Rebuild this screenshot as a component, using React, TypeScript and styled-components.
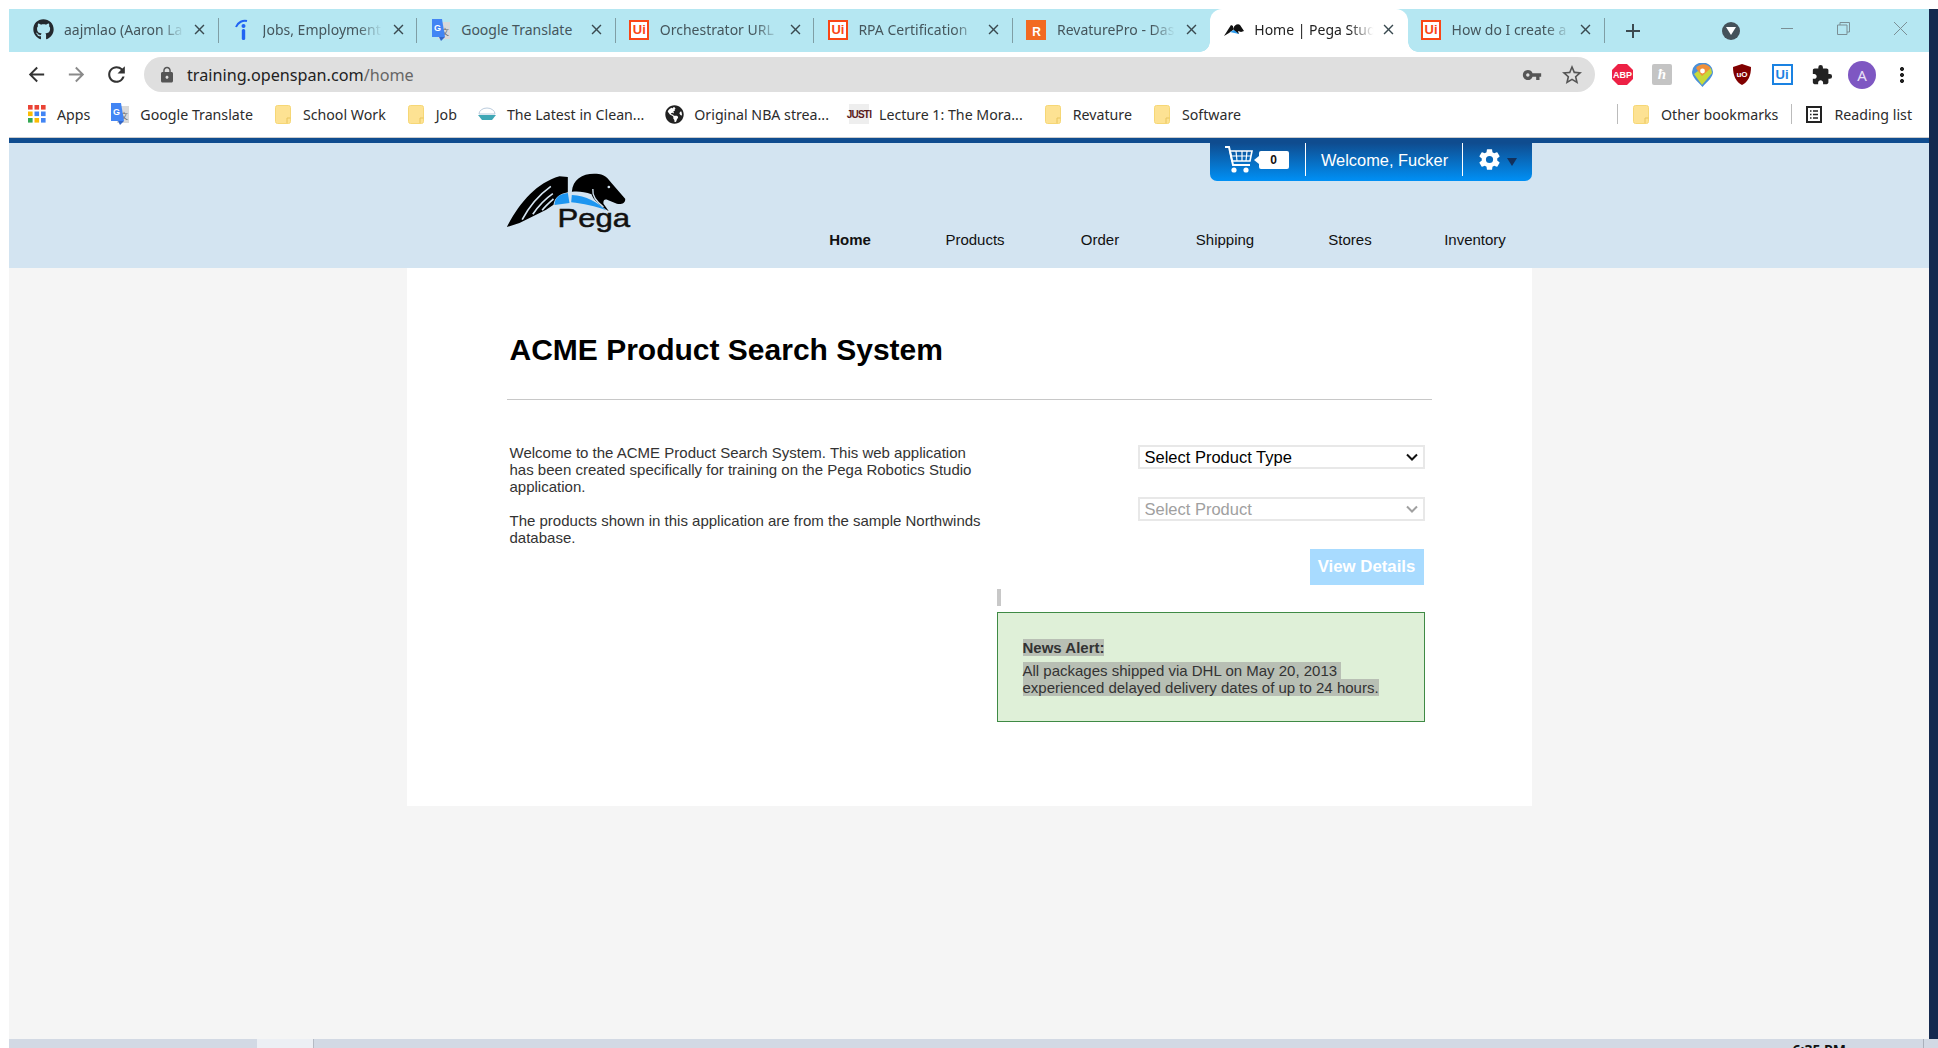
import React from "react";
import styled, { createGlobalStyle } from "styled-components";
import { FaGithub, FaGlobeAmericas } from "react-icons/fa";
import { MdLock, MdVpnKey, MdRefresh, MdArrowBack, MdArrowForward, MdStarBorder, MdClose, MdAdd, MdExtension } from "react-icons/md";
import { IoSettingsSharp } from "react-icons/io5";

const GlobalStyle = createGlobalStyle`
  html, body { margin: 0; padding: 0; height: 100%; background: #fff; overflow: hidden; }
  #root { height: 100%; }
  * { box-sizing: border-box; }
`;

const uiFont = `"Noto Sans", "Open Sans", sans-serif`;
const siteFont = `"Liberation Sans", Arial, sans-serif`;

const chevron = (color: string) =>
  `url("data:image/svg+xml,%3Csvg xmlns='http://www.w3.org/2000/svg' width='12' height='8' viewBox='0 0 12 8'%3E%3Cpath d='M1 1.5L6 6.5L11 1.5' fill='none' stroke='%23${color}' stroke-width='2'/%3E%3C/svg%3E")`;

/* ---------- favicons ---------- */

const UiSquare = styled.span<{ $color?: string; $size?: number }>`
  width: ${(p) => p.$size || 20}px;
  height: ${(p) => p.$size || 20}px;
  flex: none;
  display: flex;
  align-items: center;
  justify-content: center;
  border: 2px solid ${(p) => p.$color || "#fa4616"};
  color: ${(p) => p.$color || "#fa4616"};
  background: #fff;
  font: 700 13px ${siteFont};
`;

const RSquare = styled.span`
  width: 20px;
  height: 20px;
  flex: none;
  display: flex;
  align-items: flex-end;
  justify-content: center;
  padding-bottom: 1px;
  background: #f26a21;
  color: #fff;
  font: 700 12px ${siteFont};
`;

const IndeedIcon = () => (
  <svg width="20" height="22" viewBox="0 0 20 22">
    <path d="M4 8C6 3 11 1 15 2" fill="none" stroke="#2164f3" strokeWidth="2" />
    <circle cx="11.5" cy="7" r="2" fill="#2164f3" />
    <rect x="9.8" y="10" width="3.4" height="11" rx="1.5" fill="#2164f3" />
  </svg>
);

const TranslateIcon = () => (
  <svg width="20" height="24" viewBox="0 0 20 24">
    <rect x="7" y="4" width="12" height="17" fill="#d9d9d9" />
    <text x="10" y="17" fontSize="8" fill="#666" fontFamily="Noto Sans CJK SC, sans-serif">文</text>
    <path d="M1 1H11L14 19H1Z" fill="#4285f4" />
    <path d="M8 19L14 19L10 23Z" fill="#3367c8" />
    <text x="3" y="13" fontSize="9" fontWeight="700" fill="#fff" fontFamily="Liberation Sans, sans-serif">G</text>
  </svg>
);

const PegaMini = () => (
  <svg width="20" height="14" viewBox="0 0 20 14">
    <path d="M0 13L7 2L9 3L9 7L5 10Z" fill="#111" />
    <path d="M9 6C10 2 14 0 16 2L20 8L17 9L14 8L15 11C12 10 10 8 9 6Z" fill="#111" />
    <path d="M6 9L10 7L15 11Z" fill="#2c9cf0" />
  </svg>
);

const FolderIcon = () => (
  <svg width="16" height="19" viewBox="0 0 16 19">
    <rect x="0.5" y="0.5" width="15" height="18" rx="2" fill="#fde293" stroke="#f6d776" />
    <path d="M12 18V13H15.5" fill="none" stroke="#e8c55e" />
  </svg>
);

const AppsIcon = () => (
  <svg width="18" height="18" viewBox="0 0 18 18">
    {["#ea4335", "#ea4335", "#ea4335", "#fbbc05", "#4285f4", "#4285f4", "#34a853", "#fbbc05", "#4285f4"].map((c, i) => (
      <rect key={i} x={(i % 3) * 6.5} y={Math.floor(i / 3) * 6.5} width="4.6" height="4.6" fill={c} />
    ))}
  </svg>
);

const CleanIcon = () => (
  <svg width="20" height="14" viewBox="0 0 20 14">
    <path d="M2 7A8 6 0 0 1 18 7Z" fill="none" stroke="#bcd" strokeWidth="1" />
    <path d="M1 8H19L15 13H5Z" fill="#3fa7b5" />
  </svg>
);

const JustiIcon = styled.span`
  width: 20px;
  height: 20px;
  flex: none;
  display: flex;
  align-items: center;
  justify-content: center;
  background: #eee;
  color: #5a1a1a;
  font: 700 10px "Liberation Sans Narrow", ${siteFont};
  letter-spacing: -0.8px;
`;

const ReadingIcon = () => (
  <svg width="16" height="17" viewBox="0 0 16 17">
    <rect x="1" y="1" width="14" height="15" fill="none" stroke="#222" strokeWidth="2" />
    <path d="M4 5H5.5M7 5H12M4 8.5H5.5M7 8.5H12M4 12H5.5M7 12H12" stroke="#222" strokeWidth="1.4" />
  </svg>
);

/* ---------- extensions ---------- */

const AbpIcon = () => (
  <svg width="21" height="21" viewBox="0 0 21 21">
    <path d="M6 0H15L21 6V15L15 21H6L0 15V6Z" fill="#ed2145" />
    <text x="10.5" y="14" textAnchor="middle" fontSize="9" fontWeight="700" fill="#fff" fontFamily="Liberation Sans, sans-serif">ABP</text>
  </svg>
);

const GreyExt = styled.span`
  width: 20px;
  height: 21px;
  border-radius: 2px;
  background: #c4c4c4;
  color: #fff;
  display: flex;
  align-items: center;
  justify-content: center;
  font: italic 700 15px "Liberation Serif", serif;
`;

const MapsIcon = () => (
  <svg width="21" height="24" viewBox="0 0 21 24">
    <path d="M10.5 24C5 18 0 14 0 9A10.5 9.5 0 0 1 21 9C21 14 16 18 10.5 24Z" fill="#4a90d9" />
    <path d="M4 5C8 0 16 0 19 6L10 14Z" fill="#f0903a" />
    <path d="M2 11L6 8L10 13L19 5L20 10L10 22Z" fill="#c8d93a" />
    <circle cx="10.5" cy="8" r="2.4" fill="#fff" />
  </svg>
);

const UblockIcon = () => (
  <svg width="18" height="21" viewBox="0 0 18 21">
    <path d="M9 0L18 3C18 12 15 18 9 21C3 18 0 12 0 3Z" fill="#800000" />
    <text x="9" y="13" textAnchor="middle" fontSize="8" fontWeight="700" fill="#fff" fontFamily="Liberation Sans, sans-serif">uO</text>
  </svg>
);

/* ---------- data ---------- */

const tabs = [
  { title: "aajmlao (Aaron La", icon: <FaGithub size={21} color="#24292e" /> },
  { title: "Jobs, Employment", icon: <IndeedIcon /> },
  { title: "Google Translate", icon: <TranslateIcon />, plain: true },
  { title: "Orchestrator URL", icon: <UiSquare>Ui</UiSquare> },
  { title: "RPA Certification", icon: <UiSquare>Ui</UiSquare> },
  { title: "RevaturePro - Das", icon: <RSquare>R</RSquare>, noSep: true, narrow: true },
  { title: "Home | Pega Stud", icon: <PegaMini />, active: true, noSep: true, narrow: true },
  { title: "How do I create a", icon: <UiSquare>Ui</UiSquare>, narrow: true },
];

const bookmarks = [
  { label: "Apps", icon: <AppsIcon /> },
  { label: "Google Translate", icon: <TranslateIcon /> },
  { label: "School Work", icon: <FolderIcon /> },
  { label: "Job", icon: <FolderIcon /> },
  { label: "The Latest in Clean...", icon: <CleanIcon /> },
  { label: "Original NBA strea...", icon: <FaGlobeAmericas size={19} color="#222" /> },
  { label: "Lecture 1: The Mora...", icon: <JustiIcon>JUSTI</JustiIcon> },
  { label: "Revature", icon: <FolderIcon /> },
  { label: "Software", icon: <FolderIcon /> },
];

const navItems = ["Home", "Products", "Order", "Shipping", "Stores", "Inventory"];

/* ---------- browser chrome ---------- */

const Page = styled.div`
  height: 100vh;
  display: flex;
  flex-direction: column;
  padding: 9px 0 0 9px;
  background: #fff;
`;

const WindowRow = styled.div`
  flex: 1;
  min-height: 0;
  display: flex;
`;

const Browser = styled.div`
  flex: 1;
  min-width: 0;
  display: flex;
  flex-direction: column;
`;

const NavyEdge = styled.div`
  width: 9px;
  background: #14294f;
`;

const TabStrip = styled.div`
  height: 43px;
  flex: none;
  display: flex;
  padding-left: 11px;
  background: #b5e7f2;
`;

const Tab = styled.div<{ $active?: boolean; $noSep?: boolean; $narrow?: boolean }>`
  position: relative;
  width: ${(p) => (p.$narrow ? 197.3 : 198.6)}px;
  flex: none;
  display: flex;
  align-items: center;
  padding: 0 10px 2px 13px;
  font: 14px ${uiFont};
  color: ${(p) => (p.$active ? "#222" : "#45565c")};
  background: ${(p) => (p.$active ? "#fff" : "transparent")};
  border-radius: ${(p) => (p.$active ? "12px 12px 0 0" : "0")};

  &::after {
    content: "";
    position: absolute;
    right: 0;
    top: 9px;
    bottom: 9px;
    width: 1px;
    background: ${(p) => (p.$noSep ? "transparent" : "#7f9ea5")};
  }
`;

const TabCorner = styled.span<{ $side: "left" | "right" }>`
  position: absolute;
  bottom: 0;
  ${(p) => p.$side}: -10px;
  width: 10px;
  height: 10px;
  background: radial-gradient(
    circle at ${(p) => (p.$side === "left" ? "0 0" : "100% 0")},
    #b5e7f2 9.5px,
    #fff 10px
  );
`;

const Favicon = styled.span`
  width: 21px;
  flex: none;
  display: flex;
  align-items: center;
  justify-content: center;
`;

const TabTitle = styled.span<{ $plain?: boolean }>`
  flex: 1;
  min-width: 0;
  margin-left: 10px;
  white-space: nowrap;
  overflow: hidden;
  -webkit-mask-image: ${(p) => (p.$plain ? "none" : "linear-gradient(to right, #000 78%, transparent 98%)")};
  mask-image: ${(p) => (p.$plain ? "none" : "linear-gradient(to right, #000 78%, transparent 98%)")};
`;

const TabClose = styled.span`
  flex: none;
  width: 18px;
  margin-left: 4px;
  display: flex;
  justify-content: center;
  color: #3a4a50;
`;

const StripControls = styled.div`
  flex: 1;
  display: flex;
  align-items: center;
  color: #444;
`;

const NewTab = styled.span`
  margin-left: 16px;
  display: flex;
  color: #3c4a50;
`;

const SearchTabs = styled.span`
  margin-left: 77px;
  width: 18px;
  height: 18px;
  border-radius: 50%;
  background: #44525a;
  display: flex;
  align-items: center;
  justify-content: center;
`;

const WindowButtons = styled.div`
  margin-left: 41px;
  display: flex;
  align-items: center;
  gap: 44px;
  margin-top: -5px;
`;

const Toolbar = styled.div`
  height: 40px;
  flex: none;
  display: flex;
  align-items: flex-start;
  padding: 5px 0 0 15px;
  background: #fff;
`;

const ToolButton = styled.span<{ $muted?: boolean }>`
  width: 25px;
  height: 35px;
  margin-right: 15px;
  flex: none;
  display: flex;
  align-items: center;
  justify-content: center;
  color: ${(p) => (p.$muted ? "#8a8a8a" : "#333")};
`;

const Omnibox = styled.div`
  width: 1451px;
  height: 35px;
  margin-right: 7px;
  flex: none;
  display: flex;
  align-items: center;
  padding: 0 3px 0 14px;
  border-radius: 18px;
  background: #dfdfdf;
  color: #555;
`;

const Url = styled.div`
  flex: 1;
  margin-left: 11px;
  font: 16.2px ${uiFont};
  color: #222;

  span {
    color: #666;
  }
`;

const OmniIcon = styled.span`
  width: 40px;
  display: flex;
  justify-content: center;
  color: #555;
`;

const Extensions = styled.div`
  display: flex;
  align-items: center;
  height: 35px;
`;

const ExtSlot = styled.span`
  width: 40px;
  display: flex;
  align-items: center;
  justify-content: center;
`;

const Avatar = styled.span`
  width: 28px;
  height: 28px;
  border-radius: 50%;
  background: #7e57c2;
  color: #e8e0f6;
  display: flex;
  align-items: center;
  justify-content: center;
  font: 15px ${uiFont};
`;

const Dots = styled.span`
  width: 4px;
  height: 16px;
  background: radial-gradient(circle at 2px 2px, #222 1.9px, transparent 2.2px) 0 0 / 4px 6px repeat-y;
`;

const Bookmarks = styled.div`
  height: 46px;
  flex: none;
  display: flex;
  align-items: center;
  padding: 0 17px 1px 18px;
  gap: 20px;
  background: #fff;
  border-bottom: 1px solid #ccc;
`;

const Bookmark = styled.div`
  display: flex;
  align-items: center;
  gap: 10px;
  font: 14.2px ${uiFont};
  color: #2c2c2c;
  white-space: nowrap;
`;

const BookmarkIcon = styled.span`
  width: 20px;
  flex: none;
  display: flex;
  align-items: center;
  justify-content: center;
`;

const BookmarkRight = styled.div`
  margin-left: auto;
  display: flex;
  align-items: center;
  gap: 12.5px;
`;

const BarSep = styled.span`
  width: 1px;
  height: 20px;
  background: #bbb;
`;

/* ---------- site ---------- */

const Site = styled.div`
  flex: 1;
  min-height: 0;
  display: flex;
  flex-direction: column;
  background: #f5f5f5;
  font-family: ${siteFont};
`;

const SiteHeader = styled.header`
  height: 130px;
  flex: none;
  border-top: 5px solid #0f4c8f;
  background: #d3e4f1;
`;

const HeaderInner = styled.div`
  width: 1125px;
  height: 100%;
  margin: 0 auto;
  display: flex;
  justify-content: space-between;
  padding-left: 99px;
`;

const LogoBox = styled.div`
  padding-top: 30px;
`;

const HeaderRight = styled.div`
  display: flex;
  flex-direction: column;
  align-items: flex-end;
`;

const UserPanel = styled.div`
  width: 322px;
  height: 38px;
  display: flex;
  align-items: flex-start;
  border-radius: 0 0 7px 7px;
  background: linear-gradient(#0f4c8f, #0090f5);
  color: #fff;
`;

const CartSection = styled.div`
  width: 96px;
  height: 33px;
  display: flex;
  align-items: center;
  padding: 0 0 0 15px;
  border-right: 1px solid #fff;
`;

const CartBadge = styled.span`
  position: relative;
  width: 30px;
  height: 18px;
  margin-left: 6px;
  border-radius: 2px;
  background: #fff;
  color: #111;
  display: flex;
  align-items: center;
  justify-content: center;
  font: 700 12px ${siteFont};

  &::before {
    content: "";
    position: absolute;
    left: -5px;
    top: 5px;
    border-style: solid;
    border-width: 4px 5px 4px 0;
    border-color: transparent #fff transparent transparent;
  }
`;

const WelcomeText = styled.div`
  width: 157px;
  height: 33px;
  padding: 1px 0 0 2px;
  display: flex;
  align-items: center;
  justify-content: center;
  border-right: 1px solid #fff;
  font-size: 16.4px;
`;

const SettingsSection = styled.div`
  height: 33px;
  display: flex;
  align-items: center;
  padding-left: 15px;
  gap: 6px;
`;

const Caret = styled.span`
  margin-top: 4px;
  border-style: solid;
  border-width: 8px 5.5px 0 5.5px;
  border-color: #12305c transparent transparent transparent;
`;

const Nav = styled.nav`
  margin-top: 50px;
  margin-right: -6px;
  display: flex;
`;

const NavItem = styled.a<{ $active?: boolean }>`
  width: 125px;
  text-align: center;
  font-size: 15px;
  line-height: 17px;
  font-weight: ${(p) => (p.$active ? 700 : 400)};
  color: #111;
`;

const Panel = styled.main`
  width: 1125px;
  height: 538px;
  margin: 0 auto;
  padding: 63px 100px 0;
  background: #fff;
`;

const Title = styled.h1`
  margin: 0 0 0 3px;
  font-size: 30px;
  line-height: 38px;
  font-weight: 700;
  color: #000;
`;

const Rule = styled.hr`
  margin: 30px 0 0;
  border: 0;
  border-top: 1px solid #c8c8c8;
`;

const Columns = styled.div`
  display: grid;
  grid-template-columns: 490px 428px;
  margin-top: 45px;
`;

const Intro = styled.div`
  margin-top: -1px;
  padding: 0 12px 0 3px;
  font-size: 15px;
  line-height: 17px;
  color: #333;
`;

const IntroPara = styled.p`
  margin: 0 0 17px;
`;

const Form = styled.div`
  display: flex;
  flex-direction: column;
`;

const FieldSelect = styled.select`
  align-self: flex-end;
  width: 287px;
  height: 24px;
  margin-bottom: 28px;
  padding: 0 0 0 5px;
  border: 2px solid #e8e8e8;
  background: #fff ${chevron("111")} no-repeat right 5px center;
  appearance: none;
  font: 16.5px ${siteFont};
  color: #000;
  border-radius: 0;

  &:disabled {
    color: #a0a0a0;
    opacity: 1;
    background-image: ${chevron("a0a0a0")};
  }
`;

const DetailsButton = styled.button`
  align-self: flex-end;
  width: 114px;
  height: 36px;
  margin: 0 1px 0 0;
  padding: 0;
  border: 0;
  background: #a8dbff;
  color: #fff;
  font: 700 16.8px ${siteFont};
`;

const Tick = styled.span`
  width: 4px;
  height: 17px;
  margin-top: 4px;
  background: #c8c8c8;
`;

const Alert = styled.div`
  height: 110px;
  margin-top: 6px;
  padding: 26px 0 0 25px;
  border: 1px solid #3f8a45;
  background: #dff0d8;
  font-size: 15px;
  line-height: 17px;
  color: #333;
`;

const Selected = styled.span<{ $bold?: boolean }>`
  display: block;
  width: fit-content;
  white-space: pre;
  background: #b8bfb4;
  font-weight: ${(p) => (p.$bold ? 700 : 400)};
  margin-bottom: ${(p) => (p.$bold ? "6px" : "0")};
`;

const Taskbar = styled.div`
  height: 9px;
  flex: none;
  display: flex;
  overflow: hidden;
  background: #d2d9e4;
`;

const TaskGap = styled.span`
  width: 248px;
`;

const TaskActive = styled.span`
  width: 56px;
  background: #eceff4;
`;

const TaskDivider = styled.span`
  width: 1px;
  margin-right: 4px;
  background: #b5bac4;
`;

const TaskClock = styled.span`
  margin-left: auto;
  margin-right: 77px;
  padding-top: 4px;
  font: 700 14px ${uiFont};
  color: #111;
  line-height: 14px;
`;

const TaskEdge = styled.span`
  width: 1px;
  margin-right: 14px;
  background: #aab0bb;
`;

const PegaLogo = () => (
  <svg width="127" height="60" viewBox="80 130 380 180">
    <path d="M82 292C120 220 170 160 240 140L265 142V188C240 192 225 205 222 225L200 240L120 280Z" fill="#000" />
    <path d="M128 270C148 232 178 196 214 170M160 254C176 230 194 210 220 192M188 242C196 230 208 220 222 208" fill="none" stroke="#d3e4f1" strokeWidth="5" />
    <path d="M225 226C225 205 240 192 265 190L270 220Z" fill="#1e96f0" />
    <path d="M277 196C320 198 355 218 380 242C350 230 310 222 275 218Z" fill="#1e96f0" />
    <path d="M277 186C280 145 315 128 358 133C368 134 378 140 384 146L396 160L437 207C439 220 425 226 412 222L392 214C378 206 370 208 372 222L388 245C362 228 342 212 336 194C316 186 296 184 277 186Z" fill="#000" />
    <path d="M340 178C338 198 350 216 372 232" fill="none" stroke="#d3e4f1" strokeWidth="4" />
    <circle cx="388" cy="172" r="4" fill="#d3e4f1" />
    <text x="234" y="291" fontSize="78" textLength="218" lengthAdjust="spacingAndGlyphs" stroke="#111" strokeWidth="1.5" fontFamily="Liberation Sans, sans-serif" fill="#111">Pega</text>
  </svg>
);

const CartIcon = () => (
  <svg width="28" height="27" viewBox="0 0 28 27" fill="none" stroke="#fff">
    <path d="M0 1H4L8 19H25" strokeWidth="2" />
    <path d="M5 5H27L25 15H7Z" strokeWidth="1.6" />
    <path d="M11 5L12 15M17 5V15M22 5L21 15M6 10H26" strokeWidth="1.2" />
    <circle cx="9" cy="24" r="2.6" fill="#fff" stroke="none" />
    <circle cx="21" cy="24" r="2.6" fill="#fff" stroke="none" />
  </svg>
);

const App = () => (
  <Page>
    <GlobalStyle />
    <WindowRow>
      <Browser>
        <TabStrip>
          {tabs.map((t) => (
            <Tab key={t.title} $active={t.active} $noSep={t.noSep} $narrow={t.narrow}>
              {t.active && <TabCorner $side="left" />}
              {t.active && <TabCorner $side="right" />}
              <Favicon>{t.icon}</Favicon>
              <TabTitle $plain={t.plain}>{t.title}</TabTitle>
              <TabClose><MdClose size={17} /></TabClose>
            </Tab>
          ))}
          <StripControls>
            <NewTab><MdAdd size={24} /></NewTab>
            <SearchTabs>
              <svg width="10" height="8" viewBox="0 0 10 8"><path d="M0 0H10L5 8Z" fill="#fff" /></svg>
            </SearchTabs>
            <WindowButtons>
              <svg width="12" height="12" viewBox="0 0 12 12"><path d="M0 6.5H12" stroke="#7b8f95" /></svg>
              <svg width="13" height="13" viewBox="0 0 13 13" fill="none" stroke="#7b8f95"><path d="M3 3V.5H12.5V10H10M.5 3H10V12.5H.5Z" /></svg>
              <svg width="13" height="13" viewBox="0 0 13 13" stroke="#7b8f95"><path d="M0 0L13 13M13 0L0 13" /></svg>
            </WindowButtons>
          </StripControls>
        </TabStrip>
        <Toolbar>
          <ToolButton><MdArrowBack size={23} /></ToolButton>
          <ToolButton $muted><MdArrowForward size={23} /></ToolButton>
          <ToolButton><MdRefresh size={25} /></ToolButton>
          <Omnibox>
            <MdLock size={18} />
            <Url>training.openspan.com<span>/home</span></Url>
            <OmniIcon><MdVpnKey size={20} /></OmniIcon>
            <OmniIcon><MdStarBorder size={24} /></OmniIcon>
          </Omnibox>
          <Extensions>
            <ExtSlot><AbpIcon /></ExtSlot>
            <ExtSlot><GreyExt>ħ</GreyExt></ExtSlot>
            <ExtSlot><MapsIcon /></ExtSlot>
            <ExtSlot><UblockIcon /></ExtSlot>
            <ExtSlot><UiSquare $color="#1a82e2" $size={21}>Ui</UiSquare></ExtSlot>
            <ExtSlot><MdExtension size={22} color="#222" /></ExtSlot>
            <ExtSlot><Avatar>A</Avatar></ExtSlot>
            <ExtSlot><Dots /></ExtSlot>
          </Extensions>
        </Toolbar>
        <Bookmarks>
          {bookmarks.map((b) => (
            <Bookmark key={b.label}>
              <BookmarkIcon>{b.icon}</BookmarkIcon>
              {b.label}
            </Bookmark>
          ))}
          <BookmarkRight>
            <BarSep />
            <Bookmark>
              <BookmarkIcon><FolderIcon /></BookmarkIcon>
              Other bookmarks
            </Bookmark>
            <BarSep />
            <Bookmark>
              <BookmarkIcon><ReadingIcon /></BookmarkIcon>
              Reading list
            </Bookmark>
          </BookmarkRight>
        </Bookmarks>
        <Site>
          <SiteHeader>
            <HeaderInner>
              <LogoBox><PegaLogo /></LogoBox>
              <HeaderRight>
                <UserPanel>
                  <CartSection>
                    <CartIcon />
                    <CartBadge>0</CartBadge>
                  </CartSection>
                  <WelcomeText>Welcome, Fucker</WelcomeText>
                  <SettingsSection>
                    <IoSettingsSharp size={23} color="#fff" />
                    <Caret />
                  </SettingsSection>
                </UserPanel>
                <Nav>
                  {navItems.map((n) => (
                    <NavItem key={n} $active={n === "Home"}>{n}</NavItem>
                  ))}
                </Nav>
              </HeaderRight>
            </HeaderInner>
          </SiteHeader>
          <Panel>
            <Title>ACME Product Search System</Title>
            <Rule />
            <Columns>
              <Intro>
                <IntroPara>
                  Welcome to the ACME Product Search System. This web application has been created specifically for training on the Pega Robotics Studio application.
                </IntroPara>
                <IntroPara>
                  The products shown in this application are from the sample Northwinds database.
                </IntroPara>
              </Intro>
              <Form>
                <FieldSelect defaultValue="type">
                  <option value="type">Select Product Type</option>
                </FieldSelect>
                <FieldSelect disabled defaultValue="product">
                  <option value="product">Select Product</option>
                </FieldSelect>
                <DetailsButton>View Details</DetailsButton>
                <Tick />
                <Alert>
                  <Selected $bold>News Alert:</Selected>
                  <Selected>All packages shipped via DHL on May 20, 2013 </Selected>
                  <Selected>experienced delayed delivery dates of up to 24 hours.</Selected>
                </Alert>
              </Form>
            </Columns>
          </Panel>
        </Site>
      </Browser>
      <NavyEdge />
    </WindowRow>
    <Taskbar>
      <TaskGap />
      <TaskActive />
      <TaskDivider />
      <TaskClock>6:35 PM</TaskClock>
      <TaskEdge />
    </Taskbar>
  </Page>
);

export default App;
